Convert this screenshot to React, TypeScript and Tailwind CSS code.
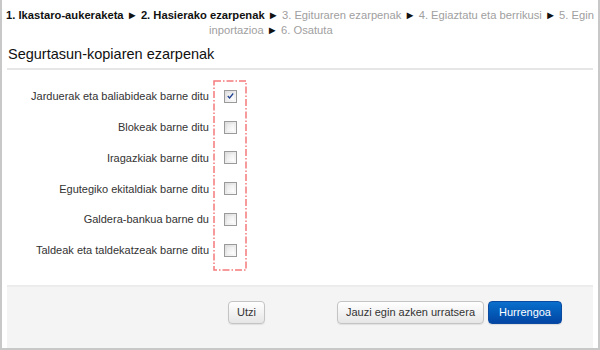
const rows = [
  { label: 'Jarduerak eta baliabideak barne ditu', checked: true },
  { label: 'Blokeak barne ditu', checked: false },
  { label: 'Iragazkiak barne ditu', checked: false },
  { label: 'Egutegiko ekitaldiak barne ditu', checked: false },
  { label: 'Galdera-bankua barne du', checked: false },
  { label: 'Taldeak eta taldekatzeak barne ditu', checked: false },
]

function Checkbox({ checked }: { checked: boolean }) {
  return (
    <div className="w-[13px] h-[13px] border border-[#9a9a9a] bg-gradient-to-br from-[#dcdcdc] to-[#fbfbfb] p-[2px]">
      <div className="w-full h-full bg-gradient-to-br from-[#e8e8e8] to-[#ffffff] flex items-center justify-center">
        {checked && (
          <svg width="9" height="8" viewBox="0 0 9 8">
            <path d="M1 4 L3.3 6.5 L8 0.8" fill="none" stroke="#1f3f8f" strokeWidth="1.6" />
          </svg>
        )}
      </div>
    </div>
  )
}

const btn =
  'h-[23px] rounded-[4px] border border-[#c4c4c4] bg-gradient-to-b from-white to-[#e6e6e6] text-[#333] shadow-[0_1px_1px_rgba(0,0,0,0.08)]'

export default function App() {
  return (
    <div
      className="w-[600px] h-[350px] bg-white border-l-2 border-r-2 border-b-2 border-[#c8c8c8] flex flex-col text-[#333]"
      style={{ fontFamily: '"Liberation Sans", Arial, sans-serif' }}
    >
      <div className="pt-[8px] text-[11.2px] leading-[15px]">
        <div className="text-center whitespace-nowrap">
          <b className="text-[#111]">1. Ikastaro-aukeraketa</b> <span className="text-[#111]">►</span>{' '}
          <b className="text-[#111]">2. Hasierako ezarpenak</b> <span className="text-[#111]">►</span>{' '}
          <span className="text-[#a0a0a0]">3. Egituraren ezarpenak</span> <span className="text-[#111]">►</span>{' '}
          <span className="text-[#a0a0a0]">4. Egiaztatu eta berrikusi</span> <span className="text-[#111]">►</span>{' '}
          <span className="text-[#a0a0a0]">5. Egin</span>
        </div>
        <div className="pl-[207px] whitespace-nowrap">
          <span className="text-[#a0a0a0]">inportazioa</span> <span className="text-[#111]">►</span>{' '}
          <span className="text-[#a0a0a0]">6. Osatuta</span>
        </div>
      </div>

      <div className="mx-[5px] mt-[6px] pb-[4px] border-b-2 border-[#e6e6e6] pl-[1px]">
        <h2 className="text-[14.5px] leading-[20px] text-[#111]">Segurtasun-kopiaren ezarpenak</h2>
      </div>

      <div className="flex mt-[10px] text-[11px]">
        <div className="w-[207px] pt-[1px] flex flex-col">
          {rows.map((r) => (
            <div key={r.label} className="h-[30.8px] flex items-center justify-end whitespace-nowrap">
              {r.label}
            </div>
          ))}
        </div>
        <div className="relative ml-[4px] w-[34px] pt-[1px] pb-[5px] flex flex-col">
          <svg className="absolute inset-0" width="34" height="191">
            <rect
              x="1"
              y="1"
              width="32"
              height="189"
              fill="none"
              stroke="#f4797c"
              strokeWidth="1.5"
              strokeDasharray="7 2 1.5 2"
            />
          </svg>
          {rows.map((r) => (
            <div key={r.label} className="h-[30.8px] flex items-center pl-[11px]">
              <Checkbox checked={r.checked} />
            </div>
          ))}
        </div>
      </div>

      <div className="mt-auto mx-[5px] h-[63px] bg-[#f4f4f4] border-t-2 border-[#ececec] flex items-start pt-[14px] pl-[221px] pr-[31px] text-[11px]">
        <button className={`${btn} px-[8px]`}>Utzi</button>
        <div className="ml-auto flex gap-[4px]">
          <button className={`${btn} px-[8px]`}>Jauzi egin azken urratsera</button>
          <button className="h-[23px] px-[10px] rounded-[4px] border border-[#0a4aa0] bg-gradient-to-b from-[#0a70cc] to-[#0345a3] text-white shadow-[0_1px_1px_rgba(0,0,0,0.1)]">
            Hurrengoa
          </button>
        </div>
      </div>
    </div>
  )
}
